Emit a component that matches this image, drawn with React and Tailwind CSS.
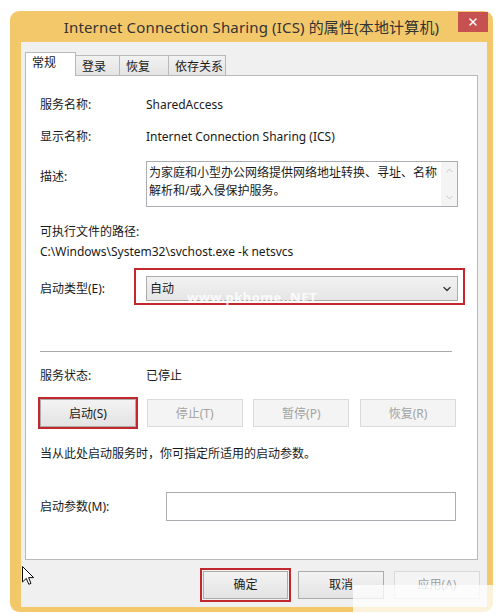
import { ChevronDown, ChevronUp, X } from "lucide-react";

// fonts: Segoe/YaHei stand-ins
const FONT = "font-['Noto_Sans','Noto_Sans_CJK_SC',sans-serif]";

const TABS = [
  { name: "常规", w: "w-[51px]", active: true },
  { name: "登录", w: "w-[45px]" },
  { name: "恢复", w: "w-[50px]" },
  { name: "依存关系", w: "w-[58px]" },
];

function Tab({ tab }) {
  if (tab.active) {
    return (
      <div
        className={`${tab.w} h-[24px] -mb-px relative z-10 bg-white border border-b-0 border-[#b9b9b9] pl-[6px] pt-[1px] leading-[17px]`}
      >
        {tab.name}
      </div>
    );
  }
  return (
    <div
      className={`${tab.w} h-[20px] -ml-px first:ml-0 bg-gradient-to-b from-[#f2f2f2] to-[#e4e4e4] border border-b-0 border-[#b9b9b9] pl-[6px] pt-[2px] leading-[17px]`}
    >
      {tab.name}
    </div>
  );
}

// annotation box drawn over a control
function RedBox({ className }) {
  return (
    <div
      className={`absolute pointer-events-none border-2 border-[#c1272d] ${className}`}
    />
  );
}

function Button({ children, disabled, className = "" }) {
  return (
    <div
      className={`h-[28px] flex items-center justify-center border ${
        disabled
          ? "bg-[#f4f4f4] border-[#dadada] text-[#a3a3a3]"
          : "bg-gradient-to-b from-[#f3f3f3] to-[#e3e3e3] border-[#acacac] text-[#1a1a1a]"
      } ${className}`}
    >
      {children}
    </div>
  );
}

function Cursor() {
  return (
    <svg
      className="absolute left-[22px] top-[566px]"
      width="13"
      height="20"
      viewBox="0 0 13 20"
    >
      <path
        d="M0.5 0.5 L0.5 16 L4.3 12.4 L6.8 18.3 L9 17.4 L6.6 11.6 L11.6 11.6 Z"
        fill="#fff"
        stroke="#111"
        strokeWidth="1"
        strokeLinejoin="round"
      />
    </svg>
  );
}

export default function App() {
  return (
    <div
      className={`relative w-[503px] h-[614px] overflow-hidden bg-white text-[12px] text-[#1a1a1a] ${FONT}`}
    >
      <div className="ml-[10px] mt-[11px] w-[483px] h-[601px] rounded-[9px] bg-[#f3c86b] flex flex-col">
        {/* title bar */}
        <div className="relative h-[31px] shrink-0 flex items-center justify-center">
          <span className="text-[15px] tracking-[0.15px] text-[#333] leading-none pt-[1px]">
            Internet Connection Sharing (ICS) 的属性(本地计算机)
          </span>
          <div className="absolute right-[5px] top-[1px] w-[30px] h-[20px] bg-[#c75050] flex items-center justify-center">
            <X size={12} strokeWidth={3} className="text-white" />
          </div>
        </div>

        {/* client area */}
        <div className="ml-[11px] mr-[6px] mb-[5px] flex-1 bg-[#f0f0f0] flex flex-col pl-[4px] pr-[9px] pt-[10px]">
          <div className="flex items-end h-[23px]">
            {TABS.map((t) => (
              <Tab key={t.name} tab={t} />
            ))}
          </div>

          <div className="relative h-[485px] bg-white border border-[#b9b9b9] pl-[14px] leading-[17px]">
            <div className="flex mt-[20px]">
              <div className="w-[106px] shrink-0">服务名称:</div>
              <div>SharedAccess</div>
            </div>
            <div className="flex mt-[15px]">
              <div className="w-[106px] shrink-0">显示名称:</div>
              <div>Internet Connection Sharing (ICS)</div>
            </div>
            <div className="flex mt-[16px]">
              <div className="w-[106px] shrink-0 pt-[7px]">描述:</div>
              <div className="w-[312px] h-[46px] border border-[#abadb3] flex">
                <div className="flex-1 pl-[2px] pt-[2px] leading-[18px] text-[12px]">
                  为家庭和小型办公网络提供网络地址转换、寻址、名称解析和/或入侵保护服务。
                </div>
                <div className="w-[16px] bg-[#f4f4f4] flex flex-col items-center justify-between py-[3px] text-[#c3c3c3]">
                  <ChevronUp size={11} strokeWidth={2} />
                  <ChevronDown size={11} strokeWidth={2} />
                </div>
              </div>
            </div>
            <div className="mt-[16px]">可执行文件的路径:</div>
            <div className="mt-[3px]">
              C:\Windows\System32\svchost.exe -k netsvcs
            </div>

            <div className="flex items-center mt-[16px]">
              <div className="w-[106px] shrink-0">启动类型(E):</div>
              <div className="relative w-[312px] h-[25px] border border-[#acacac] bg-gradient-to-b from-[#f2f2f2] to-[#e5e5e5] flex items-center justify-between pl-[3px] pr-[4px]">
                <span>自动</span>
                <ChevronDown size={12} strokeWidth={2.5} className="text-[#333]" />
                <RedBox className="-left-[13px] -right-[8px] -top-[9px] -bottom-[5px]" />
                <span className="absolute left-[40px] top-[14px] text-[13px] font-bold text-white/80 tracking-[0.5px] leading-none">
                  www.pkhome..NET
                </span>
              </div>
            </div>

            <div className="mt-[50px] w-[412px] border-t border-[#a9a9a9]" />

            <div className="flex mt-[15px]">
              <div className="w-[106px] shrink-0">服务状态:</div>
              <div>已停止</div>
            </div>

            <div className="flex justify-between w-[416px] mt-[15px]">
              <div className="relative">
                <Button className="w-[96px]">启动(S)</Button>
                <RedBox className="-left-[2px] -right-[2px] -top-[2px] -bottom-[2px]" />
              </div>
              <Button disabled className="w-[96px]">
                停止(T)
              </Button>
              <Button disabled className="w-[96px]">
                暂停(P)
              </Button>
              <Button disabled className="w-[96px]">
                恢复(R)
              </Button>
            </div>

            <div className="mt-[18px]">
              当从此处启动服务时，你可指定所适用的启动参数。
            </div>

            <div className="flex items-center mt-[30px]">
              <div className="w-[126px] shrink-0">启动参数(M):</div>
              <div className="w-[290px] h-[29px] border border-[#abadb3] bg-white" />
            </div>
          </div>

          {/* dialog buttons */}
          <div className="flex justify-end gap-[10px] mt-[11px] -mr-[2px]">
            <div className="relative">
              <Button className="w-[85px]">确定</Button>
              <RedBox className="-left-[3px] -right-[3px] -top-[3px] -bottom-[3px]" />
            </div>
            <Button className="w-[86px]">取消</Button>
            <Button disabled className="w-[86px]">
              应用(A)
            </Button>
          </div>
        </div>
      </div>

      <Cursor />
      {/* watermark smear, bottom right */}
      <div className="absolute left-[353px] top-[585px] w-[150px] h-[29px] bg-white/75" />
    </div>
  );
}
